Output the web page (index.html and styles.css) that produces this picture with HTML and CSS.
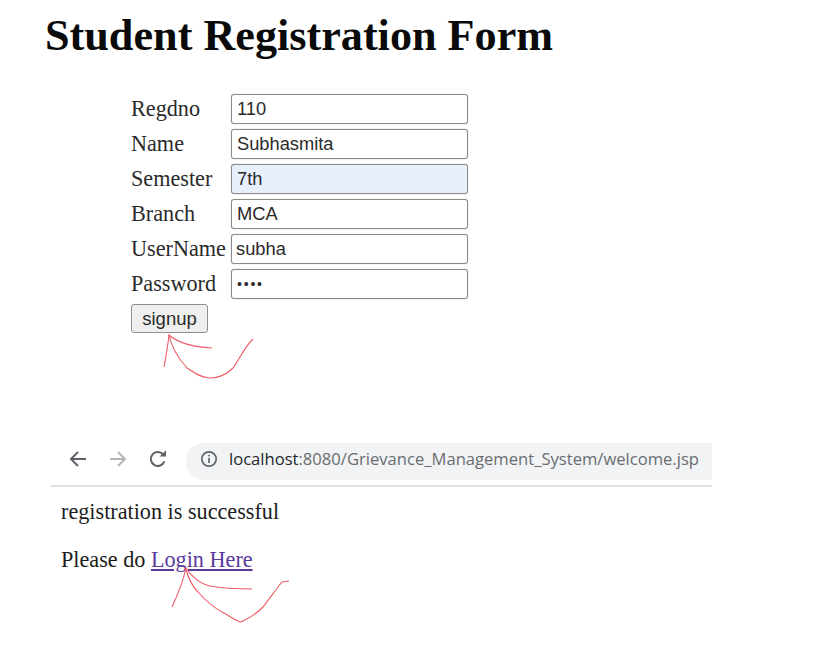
FILE: index.html
```html
<!DOCTYPE html>
<html lang="en">
<head>
<meta charset="utf-8">
<title>Student Registration Form</title>
<link rel="stylesheet" href="styles.css">
</head>
<body>
<main class="page">
  <h1 class="title">Student Registration Form</h1>
  <form class="form">
    <label class="label" for="f1">Regdno</label><input class="field" id="f1" value="110">
    <label class="label" for="f2">Name</label><input class="field" id="f2" value="Subhasmita">
    <label class="label" for="f3">Semester</label><input class="field autofill" id="f3" value="7th">
    <label class="label" for="f4">Branch</label><input class="field" id="f4" value="MCA">
    <label class="label" for="f5">UserName</label><input class="field tight" id="f5" value="subha">
    <label class="label" for="f6">Password</label><input class="field secret" id="f6" type="password" value="subh">
    <div class="actions"><button class="btn" type="button">signup</button></div>
  </form>
  <section class="shot">
    <div class="toolbar">
      <svg class="nav back" viewBox="0 0 20 20"><path d="M18 10H3M10 3l-7 7 7 7"/></svg>
      <svg class="nav fwd" viewBox="0 0 20 20"><path d="M2 10h15M10 3l7 7-7 7"/></svg>
      <svg class="nav reload" viewBox="0 0 20 20"><path d="M16.4 12.4A7 7 0 1 1 15 5.2"/><path class="fill" d="M11.6 7.6H18V1.2z"/></svg>
      <div class="omnibox">
        <svg class="info" viewBox="0 0 18 18"><circle cx="9" cy="9" r="7.2"/><path d="M9 8v5M9 5v1.6"/></svg>
        <span class="url"><span class="host">localhost</span>:8080/Grievance_Management_System/welcome.jsp</span>
      </div>
    </div>
    <p class="msg first">registration is successful</p>
    <p class="msg">Please do <a class="link" href="#">Login Here</a></p>
  </section>
</main>
<svg class="scribble" viewBox="0 0 823 659" aria-hidden="true">
  <path d="M164 367C166 356 168 345 169 335C178 343 195 347 212 348"/>
  <path d="M169 335C171 345 178 358 187 368C194 372 198 377 210 378C222 378 229 372 233 368C238 362 245 346 253 339"/>
  <path d="M172 607C178 594 183 582 186 568C190 575 200 584 210 586C225 589 240 589 252 589"/>
  <path d="M186 570C189 580 193 587 198 592C205 600 213 607 222 612C230 616 236 621 241 622C250 618 257 613 263 607C270 598 277 588 282 582L289 581"/>
</svg>
</body>
</html>
```
FILE: styles.css
```css
html, body {
  margin: 0;
  background: #fff;
}
body {
  position: relative;
  width: 823px;
  height: 659px;
  overflow: hidden;
  font-family: "Liberation Serif", serif;
  color: #1c1c1c;
}
.page {
  padding-top: 10px;
}
.title {
  margin: 0 0 0 45px;
  font-size: 44.2px;
  line-height: 52px;
  font-weight: 700;
  color: #0a0a0a;
}
.form {
  display: grid;
  grid-template-columns: 100px 237px;
  grid-auto-rows: 30px;
  row-gap: 5px;
  margin: 32px 0 0 131px;
  align-items: center;
}
.label {
  font-size: 22.2px;
  color: #2a2a2a;
}
.field {
  box-sizing: border-box;
  width: 237px;
  height: 30px;
  margin: 0;
  padding: 0 5px;
  border: 1px solid #8a8a8a;
  border-radius: 3px;
  background: #fff;
  font-family: "Liberation Sans", sans-serif;
  font-size: 18.3px;
  color: #2a2a2a;
  box-shadow: 0 0 1px #999;
}
.autofill {
  background: #e8f0fe;
}
.tight {
  padding-left: 4px;
}
.secret {
  font-size: 14px;
  letter-spacing: 1.8px;
}
.actions {
  grid-column: 1 / -1;
  align-self: start;
}
.btn {
  box-sizing: border-box;
  display: block;
  width: 77px;
  height: 29px;
  padding: 0;
  border: 1px solid #8f8f8f;
  border-radius: 3px;
  background: #efefef;
  font-family: "Liberation Sans", sans-serif;
  font-size: 18.5px;
  color: #2a2a2a;
}
.shot {
  width: 661px;
  margin: 109px 0 0 51px;
}
.toolbar {
  display: flex;
  align-items: center;
  height: 42px;
  padding-left: 17px;
  border-bottom: 2px solid #dedfe0;
}
.nav {
  flex: none;
  width: 20px;
  height: 20px;
  margin: 0 20px 10px 0;
  fill: none;
  stroke: #5f6368;
  stroke-width: 2;
}
.nav .fill {
  fill: #5f6368;
  stroke: none;
}
.fwd {
  stroke: #b4b6b9;
}
.reload {
  margin-right: 18px;
}
.omnibox {
  flex: 1;
  box-sizing: border-box;
  display: flex;
  align-items: center;
  height: 37px;
  margin-bottom: 5px;
  padding: 0 0 6px 14px;
  border-radius: 18px 0 0 18px;
  background: #f1f3f4;
}
.info {
  flex: none;
  width: 18px;
  height: 18px;
  margin-right: 11px;
  fill: none;
  stroke: #5f6368;
  stroke-width: 1.7;
}
.url {
  font-family: "Open Sans", sans-serif;
  font-size: 16.6px;
  color: #6a6d71;
  white-space: nowrap;
}
.host {
  color: #26282b;
}
.msg {
  margin: 0 0 0 10px;
  font-size: 22.2px;
  line-height: 25px;
  color: #1c1c1c;
}
.msg.first {
  margin-top: 12px;
  margin-bottom: 23px;
}
.link {
  color: #5b3a9b;
}
.scribble {
  position: absolute;
  top: 0;
  left: 0;
  width: 823px;
  height: 659px;
  pointer-events: none;
  fill: none;
  stroke: #ee5a66;
  stroke-width: 1.1;
}
```
